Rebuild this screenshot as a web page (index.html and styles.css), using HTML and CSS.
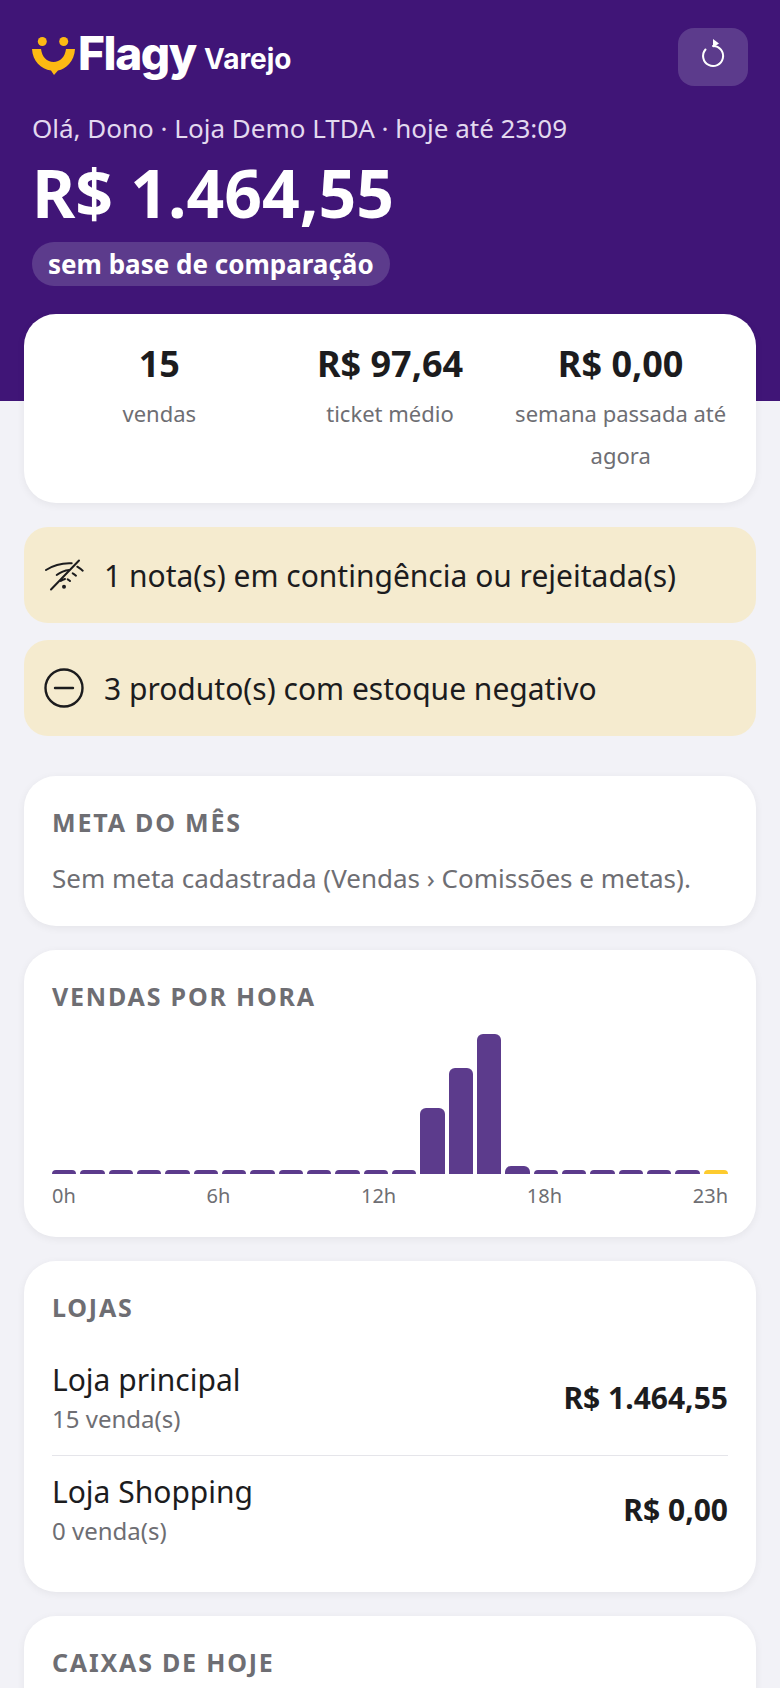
FILE: index.html
```html
<!DOCTYPE html>
<html lang="pt-BR">

<head>
    <meta charset="UTF-8">
    <meta name="viewport" content="width=device-width, initial-scale=1.0">
    <title>Flagy Varejo</title>
    <link rel="stylesheet" href="styles.css">
</head>

<body>
    <div class="page">
        <header class="hero">
            <div class="hero-top">
                <div class="logo">
                    <svg class="logo-mark" width="43" height="38" viewBox="0 0 43 38">
                        <circle cx="10.300" cy="4.500" r="4.500" fill="#fdb913" />
                        <circle cx="31.700" cy="4.500" r="4.500" fill="#fdb913" />
                        <path d="M0 12 H9 C10 20 15 25 21.500 25 C28 25 33 20 34 12 H43 C42.500 24 34 32 26 33.500 L22 38 L19 33.500 C9 32 0.500 24 0 12 Z" fill="#fdb913" />
                    </svg>
                    <span class="logo-name">Flagy</span>
                    <span class="logo-sub">Varejo</span>
                </div>
                <button class="refresh" type="button" aria-label="Atualizar">
                    <svg class="refresh-icon" width="28" height="36" viewBox="0 0 28 36" fill="none">
                        <path d="M6.500 11.500 A10 10 0 1 0 14 8" stroke="#fff" stroke-width="2" stroke-linecap="round" />
                        <path d="M14 1 L20 5.500 L14 9.500 Z" fill="#fff" />
                    </svg>
                </button>
            </div>
            <p class="hero-sub">Olá, Dono · Loja Demo LTDA · hoje até 23:09</p>
            <h1 class="hero-total">R$ 1.464,55</h1>
            <span class="hero-pill">sem base de comparação</span>
        </header>

        <main class="content">
            <section class="card stats">
                <div class="stat">
                    <strong>15</strong>
                    <span>vendas</span>
                </div>
                <div class="stat">
                    <strong>R$ 97,64</strong>
                    <span>ticket médio</span>
                </div>
                <div class="stat">
                    <strong>R$ 0,00</strong>
                    <span>semana passada até agora</span>
                </div>
            </section>

            <div class="alerts">
                <div class="alert">
                    <svg class="alert-icon" width="40" height="36" viewBox="0 0 40 36" fill="none" stroke="#1c1c1e" stroke-width="2" stroke-linecap="round">
                        <path d="M2 13 C9 8.500 18 5.800 27.700 6.300" />
                        <path d="M33.300 9.700 C35 10.800 37 12.200 38.700 13.700" />
                        <path d="M12.700 18 C16 15.500 20 13.500 25.300 13" />
                        <path d="M28.700 16.300 C30 17 31 17.800 32 18.700" />
                        <path d="M16.700 24 C18 23 19.500 22.300 21 22" />
                        <path d="M23.700 22.300 C24.500 22.800 25.300 23.300 26 24" />
                        <path d="M7 32.500 L35 3.500" />
                        <circle cx="20" cy="29.700" r="2" fill="#1c1c1e" stroke="none" />
                    </svg>
                    <span>1 nota(s) em contingência ou rejeitada(s)</span>
                </div>
                <div class="alert">
                    <svg class="alert-icon" width="40" height="40" viewBox="0 0 40 40" fill="none" stroke="#1c1c1e" stroke-width="2.400" stroke-linecap="round">
                        <circle cx="20" cy="20" r="18.500" />
                        <path d="M11 20 H29" />
                    </svg>
                    <span>3 produto(s) com estoque negativo</span>
                </div>
            </div>

            <section class="card">
                <h2 class="card-title">META DO MÊS</h2>
                <p class="card-text">Sem meta cadastrada (Vendas › Comissões e metas).</p>
            </section>

            <section class="card card-chart">
                <h2 class="card-title">VENDAS POR HORA</h2>
                <div class="chart">
                    <div class="bar"></div><div class="bar"></div><div class="bar"></div><div class="bar"></div>
                    <div class="bar"></div><div class="bar"></div><div class="bar"></div><div class="bar"></div>
                    <div class="bar"></div><div class="bar"></div><div class="bar"></div><div class="bar"></div>
                    <div class="bar"></div>
                    <div class="bar" style="height: 66px"></div>
                    <div class="bar" style="height: 106px"></div>
                    <div class="bar" style="height: 140px"></div>
                    <div class="bar" style="height: 8px"></div>
                    <div class="bar"></div><div class="bar"></div><div class="bar"></div><div class="bar"></div>
                    <div class="bar"></div><div class="bar"></div>
                    <div class="bar bar-now"></div>
                </div>
                <div class="chart-labels">
                    <span>0h</span><span>6h</span><span>12h</span><span>18h</span><span>23h</span>
                </div>
            </section>

            <section class="card card-stores">
                <h2 class="card-title">LOJAS</h2>
                <div class="stores">
                    <div class="store">
                        <div>
                            <div class="store-name">Loja principal</div>
                            <div class="store-count">15 venda(s)</div>
                        </div>
                        <div class="store-total">R$ 1.464,55</div>
                    </div>
                    <div class="store">
                        <div>
                            <div class="store-name">Loja Shopping</div>
                            <div class="store-count">0 venda(s)</div>
                        </div>
                        <div class="store-total">R$ 0,00</div>
                    </div>
                </div>
            </section>

            <section class="card card-cash">
                <h2 class="card-title">CAIXAS DE HOJE</h2>
            </section>
        </main>
    </div>
</body>

</html>
```

FILE: styles.css
```css
body {
    font-family: "Noto Sans", Arial, sans-serif;
    background-color: #f2f2f7;
    color: #1c1c1e;
    margin: 0;
    padding: 0;
}

.page {
    height: 1688px;
    overflow: hidden;
}

.hero {
    background-color: #401577;
    color: #fff;
    height: 401px;
    padding: 28px 32px 0;
    box-sizing: border-box;
}

.hero-top {
    display: flex;
    justify-content: space-between;
    align-items: flex-start;
}

.logo {
    display: flex;
    align-items: center;
    height: 58px;
}

.logo-mark {
    margin-right: 3px;
    margin-top: -3px;
}

.logo-name {
    font-family: Inter, sans-serif;
    font-size: 46px;
    font-weight: 800;
    letter-spacing: -1.400px;
    margin-top: -8px;
}

.logo-sub {
    font-family: Inter, sans-serif;
    font-size: 28px;
    font-weight: 700;
    margin-left: 8px;
    margin-top: 4px;
}

.refresh {
    width: 70px;
    height: 58px;
    border: none;
    border-radius: 16px;
    background-color: #5c3b8c;
    display: flex;
    align-items: center;
    justify-content: center;
    padding: 0;
}

.refresh-icon {
    margin-top: -2px;
}

.hero-sub {
    margin: 24px 0 0;
    font-size: 26px;
    line-height: 36px;
    color: #e3d9ef;
}

.hero-total {
    margin: 6px 0 0;
    font-size: 66px;
    line-height: 80px;
    font-weight: 700;
}

.hero-pill {
    display: inline-block;
    margin-top: 10px;
    padding: 0 16px;
    height: 44px;
    line-height: 44px;
    border-radius: 22px;
    background-color: #5c3b8c;
    font-size: 26px;
    font-weight: 700;
}

.content {
    padding: 0 24px;
    margin-top: -87px;
    display: flex;
    flex-direction: column;
    gap: 24px;
}

.card {
    background-color: #fff;
    border-radius: 32px;
    padding: 29px 28px 30px;
    box-shadow: 0 2px 8px rgba(0, 0, 0, 0.06);
}

.stats {
    display: grid;
    grid-template-columns: repeat(3, 1fr);
    gap: 16px;
    padding: 28px 28px 27px;
}

.stat {
    text-align: center;
    display: flex;
    flex-direction: column;
}

.stat strong {
    font-size: 36px;
    line-height: 44px;
    font-weight: 700;
    margin-bottom: 6px;
}

.stat span {
    font-size: 22px;
    line-height: 42px;
    color: #6e6e73;
}

.alerts {
    display: flex;
    flex-direction: column;
    gap: 17px;
    margin-bottom: 16px;
}

.alert {
    display: flex;
    align-items: center;
    gap: 20px;
    height: 96px;
    padding: 0 20px;
    border-radius: 24px;
    background-color: #f5ebcf;
    font-size: 30px;
}

.alert-icon {
    flex-shrink: 0;
}

.card-title {
    margin: 0;
    font-size: 25px;
    line-height: 34px;
    font-weight: 700;
    letter-spacing: 1.800px;
    color: #6e6e73;
}

.card-text {
    margin: 21px 0 0;
    font-size: 26px;
    line-height: 36px;
    color: #6e6e73;
}

.card-chart {
    padding-bottom: 27px;
}

.chart {
    display: flex;
    align-items: flex-end;
    gap: 4px;
    height: 140px;
    margin-top: 21px;
}

.bar {
    flex: 1;
    height: 4px;
    background-color: #5c3b8c;
    border-radius: 6px 6px 0 0;
}

.bar-now {
    background-color: #fdcb2e;
}

.chart-labels {
    display: flex;
    justify-content: space-between;
    margin-top: 8px;
    font-size: 20px;
    line-height: 28px;
    color: #6e6e73;
}

.card-stores {
    padding-bottom: 25px;
}

.stores {
    margin-top: 20px;
}

.store {
    display: flex;
    justify-content: space-between;
    align-items: center;
    padding: 16px 0 20px;
}

.store + .store {
    border-top: 1px solid #e5e5ea;
}

.store-name {
    font-size: 30px;
    line-height: 40px;
}

.store-count {
    margin-top: 3px;
    font-size: 24px;
    line-height: 32px;
    color: #6e6e73;
}

.store-total {
    font-size: 30px;
    font-weight: 700;
}

.card-cash {
    min-height: 200px;
}
```
